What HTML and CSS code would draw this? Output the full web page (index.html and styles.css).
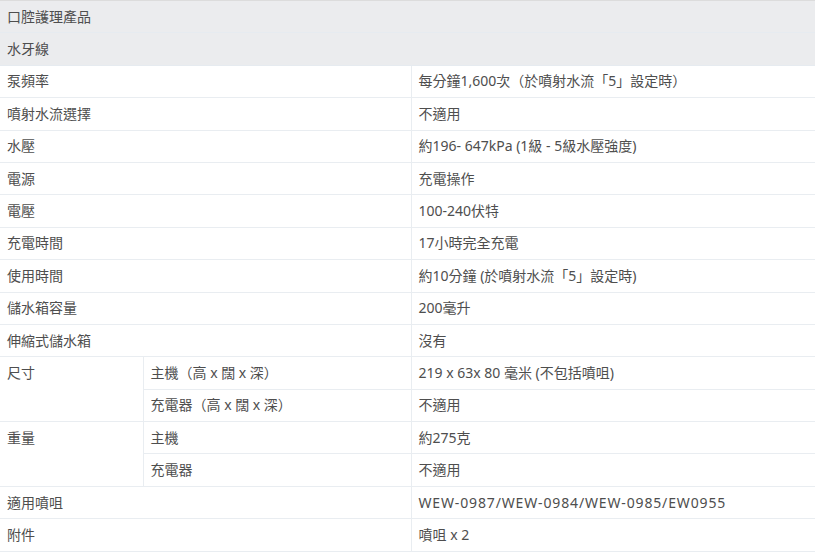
FILE: index.html
```html
<!DOCTYPE html>
<html lang="zh-Hant">
<head>
<meta charset="utf-8">
<link rel="stylesheet" href="styles.css">
</head>
<body>
<table class="spec">
  <colgroup><col class="c1"><col class="c2"><col class="c3"></colgroup>
  <tr class="head"><td colspan="3">口腔護理產品</td></tr>
  <tr class="head"><td colspan="3">水牙線</td></tr>
  <tr><td colspan="2">泵頻率</td><td class="val">每分鐘1,600次（於噴射水流「5」設定時）</td></tr>
  <tr><td colspan="2">噴射水流選擇</td><td class="val">不適用</td></tr>
  <tr><td colspan="2">水壓</td><td class="val">約196- 647kPa (1級 - 5級水壓強度)</td></tr>
  <tr><td colspan="2">電源</td><td class="val">充電操作</td></tr>
  <tr><td colspan="2">電壓</td><td class="val">100-240伏特</td></tr>
  <tr><td colspan="2">充電時間</td><td class="val">17小時完全充電</td></tr>
  <tr><td colspan="2">使用時間</td><td class="val">約10分鐘 (於噴射水流「5」設定時)</td></tr>
  <tr><td colspan="2">儲水箱容量</td><td class="val">200毫升</td></tr>
  <tr><td colspan="2">伸縮式儲水箱</td><td class="val">沒有</td></tr>
  <tr><td rowspan="2" class="top">尺寸</td><td class="sub">主機（高 x 闊 x 深）</td><td class="val">219 x 63x 80 毫米 (不包括噴咀)</td></tr>
  <tr><td class="sub">充電器（高 x 闊 x 深）</td><td class="val">不適用</td></tr>
  <tr><td rowspan="2" class="top">重量</td><td class="sub">主機</td><td class="val">約275克</td></tr>
  <tr><td class="sub">充電器</td><td class="val">不適用</td></tr>
  <tr><td colspan="2">適用噴咀</td><td class="val models">WEW-0987/WEW-0984/WEW-0985/EW0955</td></tr>
  <tr><td colspan="2">附件</td><td class="val">噴咀 x 2</td></tr>
</table>
</body>
</html>
```
FILE: styles.css
```css
html, body {
  margin: 0;
  padding: 0;
  background: #ffffff;
}
.spec {
  width: 815px;
  border-collapse: collapse;
  table-layout: fixed;
  font-family: "Noto Sans", "Noto Sans CJK TC", sans-serif;
  font-size: 14px;
  color: #4e4e4e;
  border-top: 1px solid #dcdcdc;
}
.c1 { width: 143px; }
.c2 { width: 268px; }
.c3 { width: auto; }
.spec td {
  height: 32.4px;
  padding: 0 7px;
  line-height: 20px;
  border-bottom: 1px solid #e9edf1;
  vertical-align: middle;
  box-sizing: border-box;
}
.spec .head td {
  background: #ebecee;
  border-bottom: 1px solid #e6ebf0;
}
.spec td.val,
.spec td.sub {
  border-left: 1px solid #e9edf1;
}
.spec td.top {
  vertical-align: top;
  padding-top: 6px;
}
.spec td.models {
  letter-spacing: 0.85px;
}
```
